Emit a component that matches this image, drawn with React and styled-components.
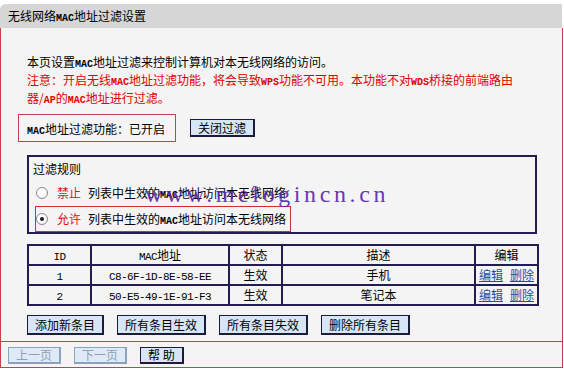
import React from "react";
import styled, { createGlobalStyle } from "styled-components";

const GlobalStyle = createGlobalStyle`
  html, body {
    margin: 0;
    padding: 0;
    background: #ffffff;
  }
  body {
    font-family: "Noto Sans CJK SC", "Liberation Sans", sans-serif;
    font-size: 12px;
    color: #000000;
  }
`;

const RED = "#c8404c";
const NAVY = "#211d4f";

const Page = styled.div`
  position: relative;
  width: 563px;
  padding-top: 4px;
`;

const TitleBar = styled.div`
  width: 554px;
  height: 24px;
  line-height: 24px;
  padding-left: 8px;
  background: #d6d6d6;
  border-top-left-radius: 6px;
`;

const Panel = styled.div`
  box-sizing: border-box;
  width: 563px;
  background: #f4f4f4;
  border: 1px solid ${RED};
  border-top: none;
`;

const Content = styled.div`
  padding: 25px 24px 6px 26px;
  display: flex;
  flex-direction: column;
  align-items: flex-start;
`;

const Latin = styled.span`
  font-family: "Liberation Mono", monospace;
  font-size: ${(p) => (p.$plain ? "11px" : "10px")};
  letter-spacing: ${(p) => (p.$plain ? "-0.6px" : "0")};
  font-weight: ${(p) => (p.$plain ? "normal" : "bold")};
  line-height: 1;
`;

const Notice = styled.p`
  margin: 0;
  line-height: 18px;
  color: ${(p) => (p.$warn ? "#e40000" : "#000")};
`;

const StatusRow = styled.div`
  display: flex;
  align-items: center;
  gap: 14px;
  margin: 7px 0 0 -9px;
`;

const StatusBox = styled.div`
  border: 1px solid ${RED};
  padding: 5px 10px 3px 8px;
  line-height: 18px;
`;

const Button = styled.button`
  box-sizing: border-box;
  height: ${(p) => p.$h || 20}px;
  padding: 0 7px;
  margin: 0;
  font-family: "Noto Sans CJK SC", sans-serif;
  font-size: 12px;
  line-height: 1;
  white-space: pre;
  background: ${(p) => (p.$off ? "#dfeaf6" : "#d6e6f6")};
  color: ${(p) => (p.$off ? "#8fa0b4" : "#000")};
  border: 1px solid ${(p) => (p.$off ? "#8aa2c0" : "#1b1b3a")};
  border-right-width: 2px;
  border-bottom-width: 2px;
  cursor: ${(p) => (p.$off ? "default" : "pointer")};
`;

const RuleBox = styled.div`
  box-sizing: border-box;
  width: 510px;
  margin-top: 13px;
  border: 2px solid ${NAVY};
  padding: 3px 4px 0 4px;
  display: flex;
  flex-direction: column;
  align-items: flex-start;
`;

const Legend = styled.div`
  line-height: 18px;
  margin-bottom: 2px;
`;

const RuleRow = styled.label`
  display: flex;
  align-items: center;
  margin-left: 2px;
  padding: 3px 4px 3px 0;
  line-height: 18px;
  border: 1px solid ${(p) => (p.$marked ? "#d03030" : "transparent")};
`;

const RuleText = styled.span`
  line-height: 18px;
`;

const Radio = styled.span`
  box-sizing: border-box;
  width: 12px;
  height: 12px;
  border-radius: 50%;
  border: 1px solid #8a8a8a;
  background: radial-gradient(circle at 40% 40%, #ffffff 40%, #e6e6e6 100%);
  margin-right: 9px;
  display: flex;
  align-items: center;
  justify-content: center;
  &::after {
    content: "";
    width: 4px;
    height: 4px;
    border-radius: 50%;
    background: ${(p) => (p.$checked ? "#1a1a1a" : "transparent")};
  }
`;

const Verb = styled.span`
  color: #e01010;
  margin-right: 7px;
`;

const Table = styled.table`
  width: 510px;
  margin-top: 10px;
  border-collapse: collapse;
  table-layout: fixed;
  th,
  td {
    border: 2px solid ${NAVY};
    height: 18px;
    padding: 0;
    line-height: 16px;
    text-align: center;
    font-weight: normal;
  }
`;

const Link = styled.a`
  color: #1c4fa6;
  text-decoration: underline;
  & + & {
    margin-left: 7px;
  }
`;

const ButtonRow = styled.div`
  display: flex;
  gap: 13px;
  margin-top: 9px;
`;

const Footer = styled.div`
  border-top: 1px solid ${RED};
  padding: 5px 7px 3px;
  display: flex;
  gap: 13px;
`;

const Watermark = styled.div`
  position: absolute;
  left: 145px;
  top: 182px;
  font-family: "Liberation Serif", serif;
  font-size: 24px;
  line-height: 24px;
  letter-spacing: 3.6px;
  color: rgba(88, 38, 176, 0.92);
  pointer-events: none;
`;

const rows = [
  { id: "1", mac: "C8-6F-1D-8E-58-EE", state: "生效", desc: "手机" },
  { id: "2", mac: "50-E5-49-1E-91-F3", state: "生效", desc: "笔记本" },
];

export default function App() {
  return (
    <Page>
      <GlobalStyle />
      <TitleBar>
        无线网络<Latin>MAC</Latin>地址过滤设置
      </TitleBar>
      <Panel>
        <Content>
          <Notice>
            本页设置<Latin>MAC</Latin>地址过滤来控制计算机对本无线网络的访问。
          </Notice>
          <Notice $warn>
            注意：开启无线<Latin>MAC</Latin>地址过滤功能，将会导致<Latin>WPS</Latin>
            功能不可用。本功能不对<Latin>WDS</Latin>桥接的前端路由
            <br />
            器/<Latin>AP</Latin>的<Latin>MAC</Latin>地址进行过滤。
          </Notice>

          <StatusRow>
            <StatusBox>
              <Latin>MAC</Latin>地址过滤功能：已开启
            </StatusBox>
            <Button $h={18}>关闭过滤</Button>
          </StatusRow>

          <RuleBox>
            <Legend>过滤规则</Legend>
            <RuleRow>
              <Radio />
              <Verb>禁止</Verb>
              <RuleText>
                列表中生效的<Latin>MAC</Latin>地址访问本无线网络
              </RuleText>
            </RuleRow>
            <RuleRow $marked>
              <Radio $checked />
              <Verb>允许</Verb>
              <RuleText>
                列表中生效的<Latin>MAC</Latin>地址访问本无线网络
              </RuleText>
            </RuleRow>
          </RuleBox>

          <Table>
            <colgroup>
              <col style={{ width: 63 }} />
              <col style={{ width: 138 }} />
              <col style={{ width: 53 }} />
              <col style={{ width: 193 }} />
              <col style={{ width: 63 }} />
            </colgroup>
            <thead>
              <tr>
                <th>
                  <Latin $plain>ID</Latin>
                </th>
                <th>
                  <Latin $plain>MAC</Latin>地址
                </th>
                <th>状态</th>
                <th>描述</th>
                <th>编辑</th>
              </tr>
            </thead>
            <tbody>
              {rows.map((r) => (
                <tr key={r.id}>
                  <td>
                    <Latin $plain>{r.id}</Latin>
                  </td>
                  <td>
                    <Latin $plain>{r.mac}</Latin>
                  </td>
                  <td>{r.state}</td>
                  <td>{r.desc}</td>
                  <td>
                    <Link href="#">编辑</Link>
                    <Link href="#">删除</Link>
                  </td>
                </tr>
              ))}
            </tbody>
          </Table>

          <ButtonRow>
            <Button>添加新条目</Button>
            <Button>所有条目生效</Button>
            <Button>所有条目失效</Button>
            <Button>删除所有条目</Button>
          </ButtonRow>
        </Content>
        <Footer>
          <Button $h={17} $off>
            上一页
          </Button>
          <Button $h={17} $off>
            下一页
          </Button>
          <Button $h={17}>帮 助</Button>
        </Footer>
      </Panel>
      <Watermark>www.melogincn.cn</Watermark>
    </Page>
  );
}
